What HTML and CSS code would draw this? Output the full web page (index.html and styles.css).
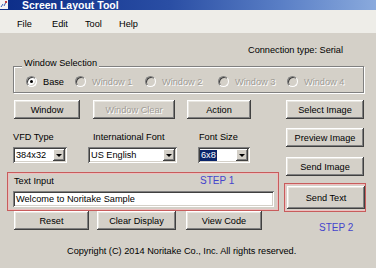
FILE: index.html
```html
<!DOCTYPE html>
<html>
<head>
<meta charset="utf-8">
<link rel="stylesheet" href="styles.css">
</head>
<body>
<div class="window">
  <div class="titlebar">
    <svg class="appicon" width="8" height="9" viewBox="0 0 8 9"><rect x="0" y="0" width="8" height="9" fill="#f4f4f4"/><path d="M1 7 L3 4 M4 6 L6 2" stroke="#3a5fb0" stroke-width="1"/><rect x="5" y="1" width="2" height="2" fill="#c04040"/></svg>
    <span class="title">Screen Layout Tool</span>
  </div>
  <div class="menubar">
    <span class="menu m-file">File</span>
    <span class="menu m-edit">Edit</span>
    <span class="menu m-tool">Tool</span>
    <span class="menu m-help">Help</span>
  </div>
  <div class="client">
    <div class="conn">Connection type: Serial</div>
    <div class="group">
      <div class="group-label">Window Selection</div>
      <div class="radios">
        <div class="radio-item ri-base"><span class="radio checked"></span><span class="rlabel">Base</span></div>
        <div class="radio-item ri-w1 disabled"><span class="radio"></span><span class="rlabel">Window 1</span></div>
        <div class="radio-item ri-w2 disabled"><span class="radio"></span><span class="rlabel">Window 2</span></div>
        <div class="radio-item ri-w3 disabled"><span class="radio"></span><span class="rlabel">Window 3</span></div>
        <div class="radio-item ri-w4 disabled"><span class="radio"></span><span class="rlabel">Window 4</span></div>
      </div>
    </div>
    <div class="form">
      <div class="leftcol">
        <div class="row row1">
          <div class="btn b-window">Window</div>
          <div class="btn b-wclear disabled">Window Clear</div>
          <div class="btn b-action">Action</div>
        </div>
        <div class="row labels">
          <span class="lbl l-vfd">VFD Type</span>
          <span class="lbl l-intl">International Font</span>
          <span class="lbl l-size">Font Size</span>
        </div>
        <div class="row combos">
          <div class="combo c-vfd"><span class="cval">384x32</span><span class="dd"></span></div>
          <div class="combo c-intl"><span class="cval">US English</span><span class="dd"></span></div>
          <div class="combo c-size"><span class="cval sel">6x8</span><span class="dd"></span></div>
        </div>
        <div class="redbox textbox">
          <div class="tb-head"><span class="tb-label">Text Input</span><span class="step step1">STEP 1</span></div>
          <div class="input">Welcome to Noritake Sample</div>
        </div>
        <div class="row row5">
          <div class="btn b-reset">Reset</div>
          <div class="btn b-clear">Clear Display</div>
          <div class="btn b-view">View Code</div>
        </div>
      </div>
      <div class="rightcol">
        <div class="btn rbtn b-select">Select Image</div>
        <div class="btn rbtn b-preview">Preview Image</div>
        <div class="btn rbtn b-sendimg">Send Image</div>
        <div class="redbox sendbox"><div class="btn b-sendtext">Send Text</div></div>
        <div class="step step2">STEP 2</div>
      </div>
    </div>
    <div class="copyright">Copyright (C) 2014 Noritake Co., Inc. All rights reserved.</div>
  </div>
</div>
</body>
</html>
```

FILE: styles.css
```css
* { box-sizing: border-box; }
html, body { margin: 0; padding: 0; }
body {
  width: 376px;
  height: 268px;
  overflow: hidden;
  background: #d4d0c8;
  font-family: "Liberation Sans", Arial, sans-serif;
  font-size: 9.2px;
  color: #000;
}
.window { width: 376px; height: 268px; display: flex; flex-direction: column; }

.titlebar {
  height: 10px;
  display: flex;
  align-items: flex-start;
  background: linear-gradient(to right, #0c2d88 0%, #2a4ea4 45%, #5a7fc6 75%, #8aaadd 100%);
  overflow: hidden;
}
.appicon { display: block; margin-top: 0; }
.title {
  margin-left: 14px;
  color: #fff;
  font-weight: bold;
  font-size: 10.5px;
  line-height: 10px;
}

.menubar {
  height: 23px;
  background: #eeede8;
  display: flex;
  padding-left: 17px;
  padding-top: 8px;
  line-height: 12px;
}
.menu { display: block; }
.m-file { width: 35px; }
.m-edit { width: 33px; }
.m-tool { width: 34px; }

.client { display: flex; flex-direction: column; flex: 1; }
.conn {
  margin-top: 11px;
  line-height: 12px;
  height: 12px;
  text-align: right;
  padding-right: 33px;
}

.group {
  margin: 10px 0 0 13px;
  width: 351px;
  height: 27px;
  border: 1px solid #808080;
  box-shadow: inset 1px 1px #fff, 1px 1px #fff;
}
.group-label {
  width: fit-content;
  margin: -10px 0 0 8px;
  padding: 0 2px;
  background: #d4d0c8;
  line-height: 12px;
}
.radios { display: flex; margin-top: 6px; padding-left: 12px; height: 13px; align-items: center; }
.radio-item { display: flex; align-items: center; }
.ri-base { width: 49px; }
.ri-w1 { width: 70px; }
.ri-w2 { width: 73px; }
.ri-w3 { width: 69px; }
.radio {
  width: 11px; height: 11px;
  border-radius: 50%;
  background: #fff;
  border: 1px solid;
  border-color: #808080 #fff #fff #808080;
  box-shadow: inset 1px 1px #404040, inset -1px -1px #d4d0c8;
  margin-right: 6px;
  position: relative;
  flex: none;
}
.radio.checked::after {
  content: "";
  position: absolute;
  left: 3px; top: 3px;
  width: 3px; height: 3px;
  border-radius: 50%;
  background: #000;
}
.disabled .radio { background: #d4d0c8; }
.disabled .rlabel, .btn.disabled { color: #a09c96; text-shadow: 1px 1px #fff; }

.form { display: flex; margin-top: 7px; }
.leftcol { margin-left: 7px; width: 272px; display: flex; flex-direction: column; }
.row { display: flex; }

.btn {
  background: #d4d0c8;
  box-shadow: inset -1px -1px #404040, inset 1px 1px #fff, inset -2px -2px #808080, inset 2px 2px #e8e6e0;
  display: flex;
  align-items: center;
  justify-content: center;
  height: 19px;
  line-height: 12px;
}
.row1 { height: 19px; }
.b-window { margin-left: 7px; width: 66px; }
.b-wclear { margin-left: 13px; width: 82px; }
.b-action { margin-left: 12px; width: 64px; }

.labels { margin-top: 12px; height: 12px; line-height: 12px; }
.l-vfd { margin-left: 6px; width: 80px; }
.l-intl { width: 106px; }

.combos { margin-top: 4px; height: 16px; }
.combo {
  height: 16px;
  background: #fff;
  box-shadow: inset 1px 1px #808080, inset -1px -1px #fff, inset 2px 2px #404040, inset -2px -2px #d4d0c8;
  display: flex;
  align-items: center;
  padding: 2px;
  justify-content: space-between;
}
.c-vfd { margin-left: 6px; width: 54px; }
.c-intl { margin-left: 21px; width: 89px; }
.c-size { margin-left: 21px; width: 52px; }
.cval { padding-left: 1px; line-height: 11px; }
.cval.sel { background: #0a246a; color: #fff; padding: 0 1px; }
.dd {
  width: 12px; height: 12px;
  background: #d4d0c8;
  box-shadow: inset -1px -1px #404040, inset 1px 1px #fff, inset -2px -2px #808080;
  display: flex; align-items: center; justify-content: center;
}
.dd::after {
  content: "";
  border-left: 3px solid transparent;
  border-right: 3px solid transparent;
  border-top: 3px solid #000;
  margin-top: 1px;
}

.redbox {
  border: 1px solid #c85c5c;
  box-shadow: inset 0 0 0 1px #ecc0c0;
}
.textbox {
  margin-top: 9px;
  height: 39px;
  padding: 1px 4px 0 5px;
}
.tb-head { display: flex; height: 15px; line-height: 12px; padding-top: 1px; }
.tb-label { margin-left: 1px; width: 186px; }
.step { color: #4444cc; font-size: 10px; }
.input {
  margin-top: 2px;
  height: 16px;
  background: #fff;
  box-shadow: inset 1px 1px #808080, inset -1px -1px #fff, inset 2px 2px #404040, inset -2px -2px #d4d0c8;
  padding-left: 3px;
  line-height: 16px;
}

.row5 { height: 19px; }
.b-reset { margin-left: 7px; width: 75px; }
.b-clear { margin-left: 8px; width: 79px; }
.b-view { margin-left: 10px; width: 76px; }

.rightcol { margin-left: 5px; width: 82px; display: flex; flex-direction: column; }
.rbtn { margin-left: 2px; width: 78px; }
.b-preview { margin-top: 9px; }
.b-sendimg { margin-top: 10px; }
.sendbox { margin-top: 7px; height: 29px; padding: 2px; }
.b-sendtext { height: 23px; width: 78px; }
.step2 { margin-top: 10px; margin-left: 35px; line-height: 12px; }

.copyright { margin-top: 11px; line-height: 12px; padding-left: 67px; }
```
